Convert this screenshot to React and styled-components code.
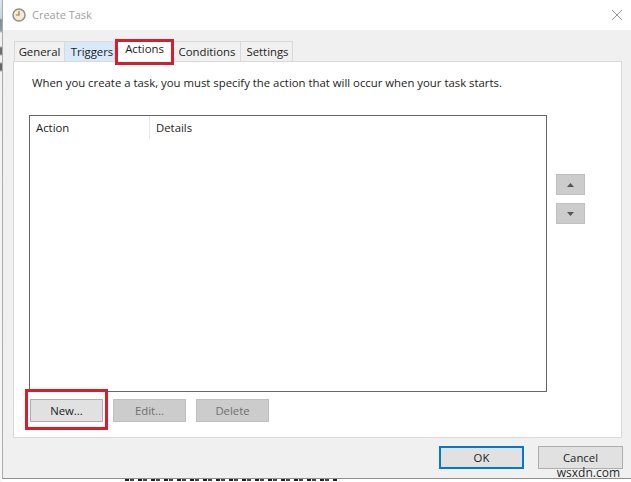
import React from "react";
import styled, { createGlobalStyle } from "styled-components";

const GlobalStyle = createGlobalStyle`
  html, body {
    margin: 0;
    padding: 0;
    background: #fff;
  }
  body {
    font-family: "Open Sans", "Noto Sans", "Liberation Sans", sans-serif;
    font-size: 11.35px;
    color: #1c1c1c;
  }
`;

const Page = styled.div`
  position: relative;
  width: 631px;
  height: 482px;
  overflow: hidden;
  background: #fff;
`;

const Window = styled.div`
  position: relative;
  z-index: 1;
  width: 629px;
  height: 479px;
  margin-left: 2px;
  box-sizing: border-box;
  border-left: 1px solid #ababab;
  border-bottom: 1px solid #8f8f8f;
  display: flex;
  flex-direction: column;
  background: #f0f0f0;
`;

const TitleBar = styled.div`
  box-sizing: border-box;
  height: 30px;
  flex: none;
  background: #fff;
  display: flex;
  align-items: center;
  padding: 0 9px 1px 9px;
  gap: 6px;
`;

const WindowTitle = styled.span`
  flex: 1;
  font-size: 11px;
  color: #a0a0a0;
`;

const Body = styled.div`
  flex: 1;
  display: flex;
  flex-direction: column;
  padding: 11px 8px 0 10px;
`;

const TabRow = styled.div`
  display: flex;
  height: 20px;
  padding-left: 1px;
`;

const Tab = styled.div`
  box-sizing: border-box;
  width: ${(p) => p.$w}px;
  height: ${(p) => (p.$active ? 23 : 20)}px;
  margin-top: ${(p) => (p.$active ? -2 : 0)}px;
  padding-top: ${(p) => (p.$active ? 1 : 2)}px;
  padding-left: ${(p) => p.$shift || 0}px;
  text-align: center;
  line-height: 16px;
  border: 1px solid #d9d9d9;
  border-bottom: none;
  border-left-width: ${(p) => (p.$first || p.$active ? 1 : 0)}px;
  background: ${(p) => (p.$active ? "#fff" : p.$hover ? "#d8eaf9" : "#f0f0f0")};
  position: relative;
  z-index: ${(p) => (p.$active ? 1 : 0)};
`;

const Panel = styled.div`
  box-sizing: border-box;
  width: 609px;
  height: 377px;
  background: #fff;
  border: 1px solid #d9d9d9;
  padding: 13px 15px 0 15px;
`;

const Intro = styled.div`
  line-height: 16px;
  height: 16px;
  padding-left: 3px;
  white-space: nowrap;
`;

const ListRow = styled.div`
  display: flex;
  margin-top: 24px;
`;

const ListBox = styled.div`
  box-sizing: border-box;
  width: 518px;
  height: 277px;
  border: 1px solid #666;
  background: #fff;
`;

const ListHead = styled.div`
  display: flex;
  height: 23px;
`;

const HeadCell = styled.div`
  box-sizing: border-box;
  width: ${(p) => p.$w}px;
  padding-left: 6px;
  line-height: 23px;
  border-right: ${(p) => (p.$divider ? "1px solid #e3e9ef" : "none")};
`;

const MoveButtons = styled.div`
  display: flex;
  flex-direction: column;
  gap: 8px;
  margin: 59px 0 0 9px;
`;

const MoveButton = styled.div`
  box-sizing: border-box;
  width: 29px;
  height: 21px;
  background: #cccccc;
  border: 1px solid #bfbfbf;
  display: flex;
  align-items: center;
  justify-content: center;
`;

const ButtonRow = styled.div`
  display: flex;
  gap: 10px;
  margin: 7px 0 0 1px;
`;

const Button = styled.div`
  box-sizing: border-box;
  width: ${(p) => p.$w || 73}px;
  height: 23px;
  line-height: 21px;
  text-align: center;
  background: ${(p) => (p.$disabled ? "#cccccc" : "#e1e1e1")};
  color: ${(p) => (p.$disabled ? "#6f6f6f" : "#1c1c1c")};
  border: ${(p) => (p.$primary ? "2px solid #0078d7" : p.$disabled ? "1px solid #bfbfbf" : "1px solid #adadad")};
  ${(p) => p.$primary && "line-height: 19px;"}
`;

const Footer = styled.div`
  display: flex;
  justify-content: flex-end;
  gap: 14px;
  margin-top: 8px;
`;

const Highlight = styled.div`
  position: absolute;
  box-sizing: border-box;
  left: ${(p) => p.$x}px;
  top: ${(p) => p.$y}px;
  width: ${(p) => p.$w}px;
  height: ${(p) => p.$h}px;
  border: 3px solid #d41f2e;
  z-index: 2;
`;

const Watermark = styled.div`
  position: absolute;
  right: 11px;
  bottom: 2px;
  font-size: 12px;
  line-height: 14px;
  color: #2a2a2a;
  z-index: 2;
`;

// tops of the desktop text that peeks out under the window, not readable
const DesktopScrap = styled.div`
  position: absolute;
  left: 125px;
  top: 479px;
  width: 212px;
  height: 2px;
  background: repeating-linear-gradient(
    90deg,
    #222 0,
    #222 4px,
    #fff 4px,
    #fff 5px,
    #444 5px,
    #444 9px,
    #fff 9px,
    #fff 13px
  );
`;

const Sliver = styled.div`
  position: absolute;
  left: 0;
  top: 0;
  width: 2px;
  height: 482px;
  background: linear-gradient(
    #dfe6ec 0,
    #c9d3dc 18px,
    #7d8c98 20px,
    #8f9ca8 31px,
    #eef0f2 33px,
    #eef0f2 46px,
    #6d6d6d 48px,
    #6d6d6d 54px,
    #eef0f2 56px,
    #eef0f2 62px,
    #666 64px,
    #666 70px,
    #f2f2f2 72px,
    #f7f7f7 482px
  );
`;

const ClockIcon = () => (
  <svg width="14" height="14" viewBox="0 0 14 14">
    <circle cx="7" cy="7" r="6" fill="#f4ecd2" stroke="#8e8e8e" strokeWidth="1.5" />
    <path d="M7 3.2V7H3.8" fill="none" stroke="#8f7a3e" strokeWidth="1.2" />
  </svg>
);

const CloseIcon = () => (
  <svg width="10" height="10" viewBox="0 0 10 10">
    <path d="M0 0l10 10M10 0L0 10" stroke="#8a8a8a" strokeWidth="0.9" />
  </svg>
);

const UpArrow = () => (
  <svg width="7" height="4" viewBox="0 0 7 4">
    <path d="M3.5 0L7 4H0z" fill="#555" />
  </svg>
);

const DownArrow = () => (
  <svg width="7" height="4" viewBox="0 0 7 4">
    <path d="M0 0h7L3.5 4z" fill="#555" />
  </svg>
);

const tabs = [
  { label: "General", w: 51, first: true },
  { label: "Triggers", w: 50, hover: true, shift: 5 },
  { label: "Actions", w: 59, active: true },
  { label: "Conditions", w: 67 },
  { label: "Settings", w: 52, shift: 2 },
];

export default function App() {
  return (
    <Page>
      <GlobalStyle />
      <Sliver />
      <DesktopScrap />
      <Window>
        <TitleBar>
          <ClockIcon />
          <WindowTitle>Create Task</WindowTitle>
          <CloseIcon />
        </TitleBar>
        <Body>
          <TabRow>
            {tabs.map((t) => (
              <Tab key={t.label} $w={t.w} $first={t.first} $hover={t.hover} $active={t.active} $shift={t.shift}>
                {t.label}
              </Tab>
            ))}
          </TabRow>
          <Panel>
            <Intro>When you create a task, you must specify the action that will occur when your task starts.</Intro>
            <ListRow>
              <ListBox>
                <ListHead>
                  <HeadCell $w={120} $divider>Action</HeadCell>
                  <HeadCell $w={200}>Details</HeadCell>
                </ListHead>
              </ListBox>
              <MoveButtons>
                <MoveButton><UpArrow /></MoveButton>
                <MoveButton><DownArrow /></MoveButton>
              </MoveButtons>
            </ListRow>
            <ButtonRow>
              <Button>New...</Button>
              <Button $disabled>Edit...</Button>
              <Button $disabled>Delete</Button>
            </ButtonRow>
          </Panel>
          <Footer>
            <Button $primary $w={85}>OK</Button>
            <Button $w={85}>Cancel</Button>
          </Footer>
        </Body>
      </Window>
      <Highlight $x={115} $y={39} $w={59} $h={26} />
      <Highlight $x={25} $y={389} $w={83} $h={41} />
      <Watermark>wsxdn.com</Watermark>
    </Page>
  );
}
